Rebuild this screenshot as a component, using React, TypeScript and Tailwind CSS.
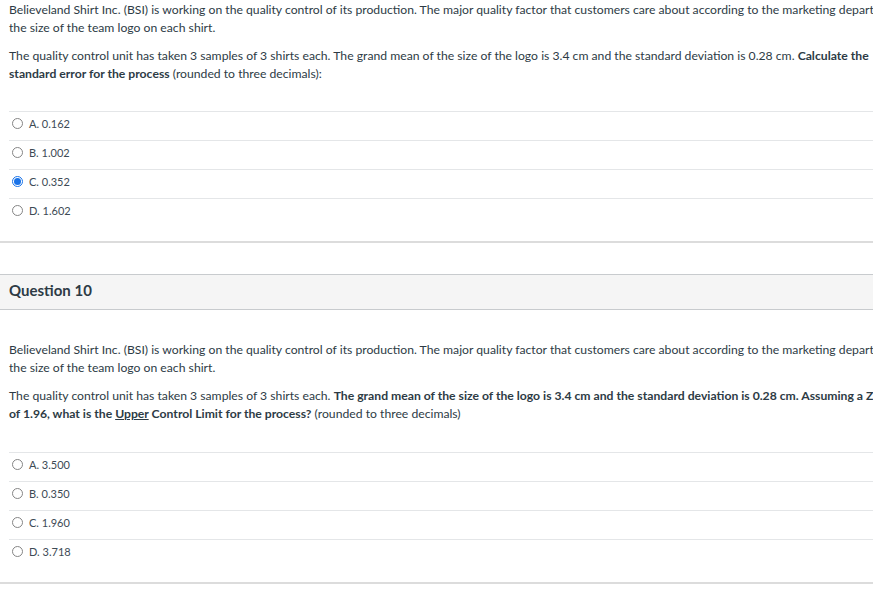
import React from "react";

type Answer = { label: string; checked?: boolean };

const q9Answers: Answer[] = [
  { label: "A. 0.162" },
  { label: "B. 1.002" },
  { label: "C. 0.352", checked: true },
  { label: "D. 1.602" },
];

const q10Answers: Answer[] = [
  { label: "A. 3.500" },
  { label: "B. 0.350" },
  { label: "C. 1.960" },
  { label: "D. 3.718" },
];

function Radio({ checked }: { checked?: boolean }) {
  if (checked) {
    return (
      <span className="flex h-[11px] w-[11px] shrink-0 items-center justify-center rounded-full border border-[#1a73e8] bg-white">
        <span className="block h-[7px] w-[7px] rounded-full bg-[#1a73e8]" />
      </span>
    );
  }
  return <span className="block h-[11px] w-[11px] shrink-0 rounded-full border border-[#858585] bg-white" />;
}

function AnswerList({ answers }: { answers: Answer[] }) {
  return (
    <div className="ml-[9px]">
      {answers.map((a) => (
        <div
          key={a.label}
          className="flex h-[29px] items-start gap-[6px] border-t border-[#e4e6e8] pl-[3px] pt-[4px]"
        >
          <span className="mt-[2px] flex">
            <Radio checked={a.checked} />
          </span>
          <span className="text-[11px] leading-[15px] text-[#3d4a55]">{a.label}</span>
        </div>
      ))}
    </div>
  );
}

const intro =
  "Believeland Shirt Inc. (BSI) is working on the quality control of its production. The major quality factor that customers care about according to the marketing department is";

export default function App() {
  return (
    <div
      className="h-[593px] w-[873px] overflow-hidden bg-white text-[#2d3b45]"
      style={{ fontFamily: "Lato, 'Open Sans', sans-serif" }}
    >
      <div className="w-[980px]">
        {/* Question 9 (tail) */}
        <div className="px-[9px] pt-[1px] text-[12.2px] leading-[18px]">
          <p className="whitespace-nowrap">
            {intro}
            <br />
            the size of the team logo on each shirt.
          </p>
          <p className="mt-[10px] whitespace-nowrap">
            The quality control unit has taken 3 samples of 3 shirts each. The grand mean of the size of the logo
            is 3.4 cm and the standard deviation is 0.28 cm. <b>Calculate the</b>
            <br />
            <b>standard error for the process</b> (rounded to three decimals):
          </p>
        </div>
        <div className="mt-[28px]">
          <AnswerList answers={q9Answers} />
        </div>
        <div className="mt-[14px] border-t-2 border-[#dcdcdc]" />

        {/* Question 10 */}
        <div className="mt-[31px] flex h-[36px] items-center border-y border-[#c8cbce] bg-[#f5f5f5] px-[9px] pb-[3px]">
          <h2 className="text-[15px] font-bold text-[#2d3b45]">Question 10</h2>
        </div>
        <div className="mt-[31px] px-[9px] text-[12.2px] leading-[18px]">
          <p className="whitespace-nowrap">
            {intro}
            <br />
            the size of the team logo on each shirt.
          </p>
          <p className="mt-[10px] whitespace-nowrap">
            The quality control unit has taken 3 samples of 3 shirts each.{" "}
            <b>
              The grand mean of the size of the logo is 3.4 cm and the standard deviation is 0.28 cm. Assuming a
              Z-value
            </b>
            <br />
            <b>
              of 1.96, what is the <u>Upper</u> Control Limit for the process?
            </b>{" "}
            (rounded to three decimals)
          </p>
        </div>
        <div className="mt-[29px]">
          <AnswerList answers={q10Answers} />
        </div>
        <div className="mt-[14px] border-t-2 border-[#dcdcdc]" />
      </div>
    </div>
  );
}
